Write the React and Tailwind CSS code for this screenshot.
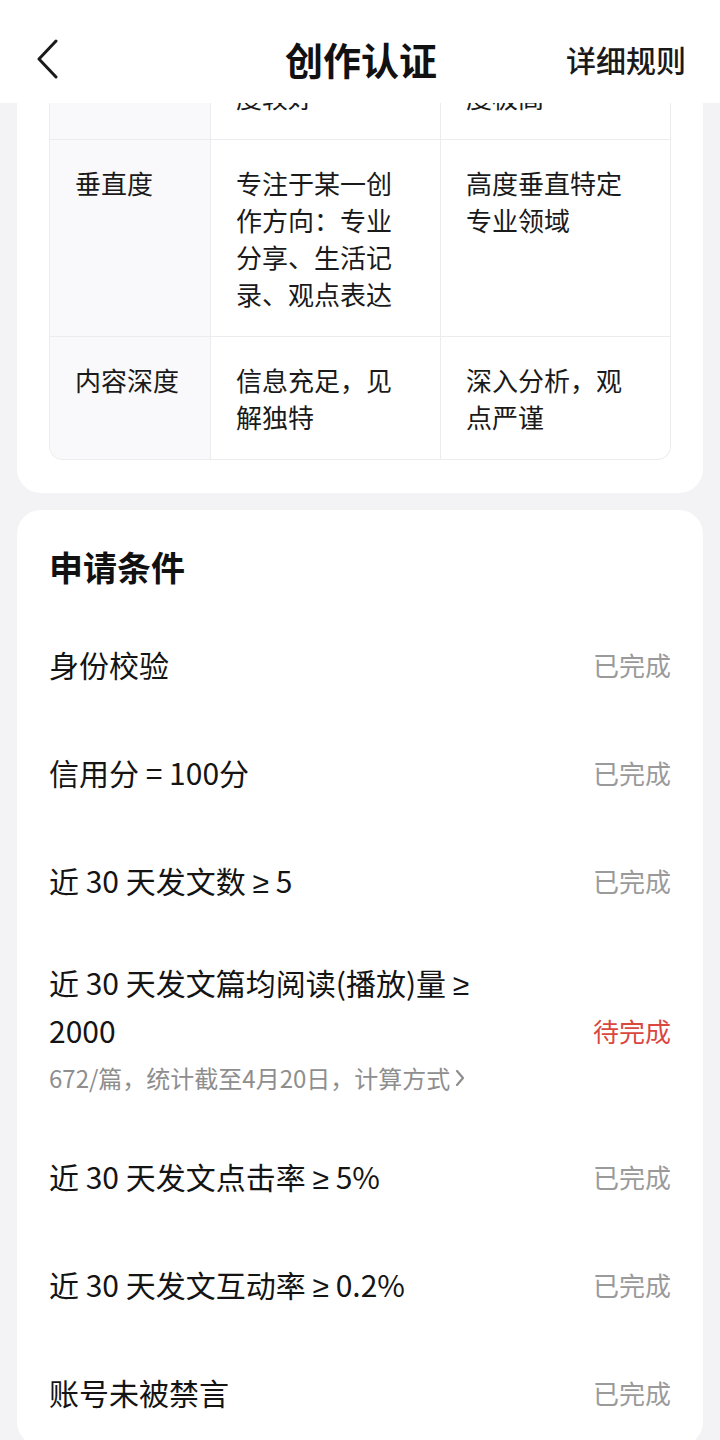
import React from "react";

const font = { fontFamily: '"Noto Sans CJK SC", "Noto Sans", sans-serif' };

// the first row is scrolled under the header; only its last line still shows
const tableRows = [
  { name: "", basic: "度较好", high: "度极高", clipped: true },
  { name: "垂直度", basic: "专注于某一创作方向：专业分享、生活记录、观点表达", high: "高度垂直特定专业领域" },
  { name: "内容深度", basic: "信息充足，见解独特", high: "深入分析，观点严谨" },
];

// "≥" is set in a latin face so it gets the upright form
const Ge = () => <span className="leading-none" style={{ fontFamily: '"Noto Sans", sans-serif' }}>≥</span>;

const conditions = [
  { key: "id", label: "身份校验", done: true },
  { key: "credit", label: "信用分 = 100分", done: true },
  { key: "posts", label: <>近 30 天发文数 <Ge /> 5</>, done: true },
  {
    key: "reads",
    label: <>近 30 天发文篇均阅读(播放)量 <Ge /> 2000</>,
    done: false,
    note: "672/篇，统计截至4月20日，计算方式",
  },
  { key: "ctr", label: <>近 30 天发文点击率 <Ge /> 5%</>, done: true },
  { key: "engage", label: <>近 30 天发文互动率 <Ge /> 0.2%</>, done: true },
  { key: "ban", label: "账号未被禁言", done: true },
];

const BackIcon = () => (
  <svg width="24" height="40" viewBox="0 0 24 40" fill="none">
    <path d="M20 2 L3 20 L20 38" stroke="#1a1a1a" strokeWidth="3" strokeLinecap="round" strokeLinejoin="round" />
  </svg>
);

const Header = () => (
  <header className="relative z-10 h-[103px] bg-white flex items-center justify-between pl-[36px] pr-[34px] pt-[14px]">
    <div className="w-[150px] flex items-center">
      <BackIcon />
    </div>
    <h1 className="text-[38px] leading-[50px] font-bold text-[#111] whitespace-nowrap">创作认证</h1>
    <div className="w-[150px] text-right text-[30px] leading-[44px] font-medium text-[#1a1a1a] whitespace-nowrap">
      详细规则
    </div>
  </header>
);

const StandardsTable = () => (
  <div className="border border-[#ececee] border-t-0 rounded-b-[14px] overflow-hidden">
    {tableRows.map((row, i) => {
      const pad = row.clipped ? "pt-[4px] pb-[24px]" : "py-[24px]";
      return (
        <div
          key={i}
          className={"grid grid-cols-[161px_230px_1fr] " + (i < tableRows.length - 1 ? "border-b border-[#ececee]" : "")}
        >
          <div className={"bg-[#f9f9fb] border-r border-[#ececee] pl-[25px] pr-[12px] text-[26px] leading-[37px] text-[#1a1a1a] " + pad}>
            {row.name}
          </div>
          <div className={"border-r border-[#ececee] pl-[25px] pr-[26px] text-[26px] leading-[37px] text-[#1a1a1a] " + pad}>
            {row.basic}
          </div>
          <div className={"pl-[25px] pr-[26px] text-[26px] leading-[37px] text-[#1a1a1a] " + pad}>
            {row.high}
          </div>
        </div>
      );
    })}
  </div>
);

const ConditionRow = ({ item }) => (
  <div className={"flex items-center justify-between " + (item.note ? "pt-[24px] pb-[20px]" : "py-[30px]")}>
    <div className="flex-1 pr-[60px]">
      <div className="text-[30px] leading-[48px] text-[#141414] max-w-[470px]">{item.label}</div>
      {item.note && (
        <div className="flex items-center text-[24px] leading-[48px] text-[#8e8e8e]">
          {item.note}
          <svg width="12" height="20" viewBox="0 0 12 20" fill="none" className="ml-[4px]">
            <path d="M3 3 L9 10 L3 17" stroke="#8e8e8e" strokeWidth="2.2" strokeLinecap="round" strokeLinejoin="round" />
          </svg>
        </div>
      )}
    </div>
    <div className={"text-[26px] shrink-0 " + (item.done ? "text-[#9a9a9a]" : "text-[#d9473e]")}>
      {item.done ? "已完成" : "待完成"}
    </div>
  </div>
);

export default function App() {
  return (
    <div className="w-[720px] h-[1440px] bg-[#f3f3f5] flex flex-col overflow-hidden" style={font}>
      <Header />
      <main className="flex-1 overflow-hidden">
        <div className="-mt-[29px] px-[17px] flex flex-col gap-[17px]">
          {/* scoring standards card, scrolled so only its lower part shows */}
          <section className="bg-white rounded-b-[24px] px-[32px] pb-[33px]">
            <StandardsTable />
          </section>

          {/* application conditions */}
          <section className="bg-white rounded-[24px] px-[32px] pt-[33px]">
            <h2 className="text-[34px] leading-[48px] font-bold text-[#111] mb-[19px]">申请条件</h2>
            {conditions.map((item) => (
              <ConditionRow key={item.key} item={item} />
            ))}
          </section>
        </div>
      </main>
    </div>
  );
}
